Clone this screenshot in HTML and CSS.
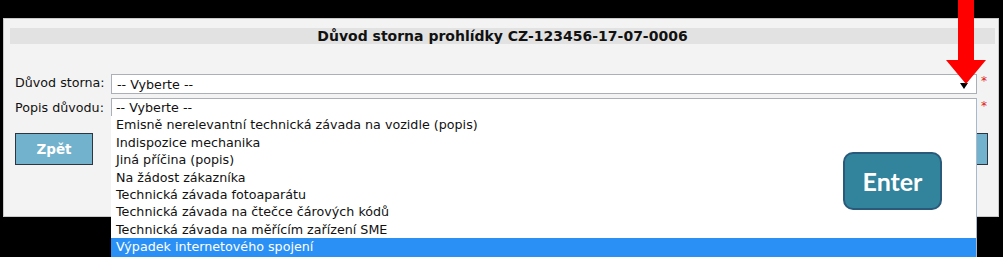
FILE: index.html
```html
<!DOCTYPE html>
<html lang="cs">
<head>
<meta charset="utf-8">
<title>Důvod storna prohlídky</title>
<link rel="stylesheet" href="styles.css">
</head>
<body>
<div class="screen">
  <div class="panel">
    <div class="panel-title">Důvod storna prohlídky CZ-123456-17-07-0006</div>
    <div class="form">
      <div class="row row-first">
        <label class="lbl">Důvod storna:</label>
        <div class="select">
          <span class="select-text">-- Vyberte --</span>
          <span class="caret"></span>
        </div>
        <span class="req">*</span>
      </div>
      <div class="row row-second">
        <label class="lbl lbl-top">Popis důvodu:</label>
        <div class="select select-open">
          <ul class="listbox">
            <li class="opt opt-first">-- Vyberte --</li>
            <li class="opt">Emisně nerelevantní technická závada na vozidle (popis)</li>
            <li class="opt">Indispozice mechanika</li>
            <li class="opt">Jiná příčina (popis)</li>
            <li class="opt">Na žádost zákazníka</li>
            <li class="opt">Technická závada fotoaparátu</li>
            <li class="opt">Technická závada na čtečce čárových kódů</li>
            <li class="opt">Technická závada na měřícím zařízení SME</li>
            <li class="opt opt-selected">Výpadek internetového spojení</li>
          </ul>
        </div>
        <span class="req">*</span>
      </div>
      <div class="buttons">
        <button class="btn">Zpět</button>
        <button class="btn">Uložit</button>
      </div>
    </div>
  </div>
  <svg class="red-arrow" width="40" height="84" viewBox="0 0 40 84">
    <polygon points="12,0 28,0 28,60 40,60 20,84 0,60 12,60" fill="#ff0000"/>
  </svg>
  <div class="enter-key">Enter</div>
</div>
</body>
</html>
```
FILE: styles.css
```css
html, body {
  margin: 0;
  padding: 0;
  background: #000;
}
.screen {
  position: relative;
  width: 1003px;
  height: 257px;
  overflow: hidden;
  padding: 18px 0 0 3px;
  box-sizing: border-box;
  font-family: "DejaVu Sans", sans-serif;
  font-size: 12.7px;
  color: #111;
}
.panel {
  width: 996px;
  height: 199px;
  box-sizing: border-box;
  background: #f3f3f3;
  border: 1px solid #c9c9c9;
  padding: 9px 0 0 6px;
}
.panel-title {
  width: 985px;
  height: 16px;
  line-height: 16px;
  background: #e2e2e2;
  text-align: center;
  font-weight: bold;
  font-size: 14px;
  color: #111;
}
.form {
  padding: 30px 0 0 5px;
}
.row {
  display: grid;
  grid-template-columns: 96px 866px 20px;
  height: 20px;
}
.row-second {
  margin-top: 5px;
}
.lbl {
  line-height: 18px;
  color: #111;
}
.select {
  position: relative;
  height: 20px;
  box-sizing: border-box;
  background: #fff;
  border: 1px solid #aab0b8;
  display: flex;
  align-items: center;
  padding-left: 5px;
}
.select-open {
  border: none;
  background: transparent;
  padding: 0;
}
.caret {
  position: absolute;
  right: 8px;
  top: 8px;
  width: 0;
  height: 0;
  border-left: 4px solid transparent;
  border-right: 4px solid transparent;
  border-top: 6px solid #000;
}
.req {
  color: #e02020;
  font-size: 12px;
  line-height: 14px;
  padding-left: 4px;
}
.listbox {
  position: absolute;
  left: 0;
  top: -1px;
  width: 866px;
  margin: 0;
  padding: 0;
  list-style: none;
  background: #fff;
  border-top: 1px solid #aab0b8;
  border-right: 1px solid #a8b8d0;
  box-sizing: border-box;
  z-index: 2;
}
.opt {
  height: 17.4px;
  line-height: 17.4px;
  padding-left: 5px;
  white-space: nowrap;
}
.opt-first {
  border-left: 1px solid #aab0b8;
  padding-left: 4px;
}
.opt-selected {
  background: #2a90f5;
  color: #fff;
  height: 22px;
}
.buttons {
  display: flex;
  justify-content: space-between;
  width: 973px;
  margin-top: 14px;
}
.btn {
  width: 78px;
  height: 32px;
  box-sizing: border-box;
  background: #72b2cd;
  border: 1px solid #2b3640;
  color: #fff;
  font-family: "DejaVu Sans", sans-serif;
  font-weight: bold;
  font-size: 13.5px;
  padding: 0;
}
.red-arrow {
  position: absolute;
  left: 946px;
  top: 0;
  z-index: 3;
}
.enter-key {
  position: absolute;
  left: 843px;
  top: 152px;
  width: 99px;
  height: 58px;
  box-sizing: border-box;
  background: #32839c;
  border: 2px solid #2a5a7a;
  border-radius: 10px;
  color: #fff;
  font-family: Lato, "Open Sans", sans-serif;
  font-weight: bold;
  font-size: 25px;
  display: flex;
  align-items: center;
  justify-content: center;
  z-index: 4;
}
```
